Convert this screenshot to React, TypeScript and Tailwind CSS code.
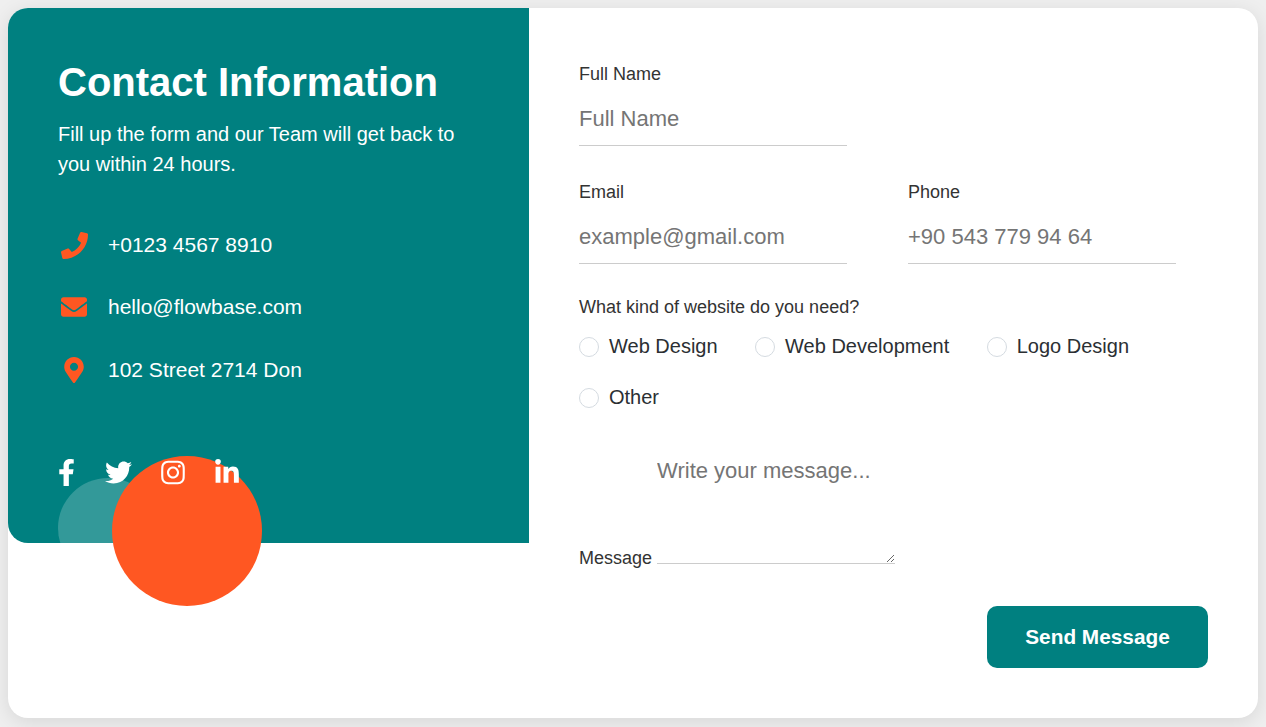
import { FaPhone, FaEnvelope, FaMapMarkerAlt, FaFacebookF, FaTwitter, FaInstagram, FaLinkedinIn } from "react-icons/fa";

const Field = ({ label, placeholder }: { label: string; placeholder: string }) => (
  <label className="block w-[268px]">
    <span className="block h-[20px] text-[18px] leading-[20px] text-[#333]">{label}</span>
    <input
      placeholder={placeholder}
      className="block mt-[9px] h-[53px] w-full border-b border-[#ccc] text-[22px] text-[#333] outline-none placeholder:text-[#757575]"
    />
  </label>
);

const Radio = ({ label }: { label: string }) => (
  <label className="flex items-center gap-[10px] text-[20px] leading-[23px] text-[#2b2f33]">
    <input type="radio" name="kind" className="appearance-none size-[20px] rounded-full border border-[#d5dbe1] bg-white" />
    {label}
  </label>
);

const contacts = [
  { icon: <FaPhone className="size-[27px]" />, text: "+0123 4567 8910" },
  { icon: <FaEnvelope className="size-[26px]" />, text: "hello@flowbase.com" },
  { icon: <FaMapMarkerAlt className="size-[26px]" />, text: "102 Street 2714 Don" },
];

export default function App() {
  return (
    <div className="h-[727px] overflow-hidden bg-[#efefef] p-[8px] font-['Liberation_Sans',Arial,sans-serif]">
      <div className="relative flex h-[710px] w-[1250px] items-start overflow-hidden rounded-[20px] bg-white shadow-[0_4px_20px_rgba(0,0,0,0.1)]">
        {/* left panel */}
        <div className="h-[535px] w-[521px] shrink-0 rounded-bl-[20px] bg-[#008080] pl-[50px] pt-[50px] text-white">
          <h1 className="text-[40px] font-bold leading-[48px]">Contact Information</h1>
          <p className="mt-[13px] w-[410px] text-[20px] leading-[30px]">
            Fill up the form and our Team will get back to you within 24 hours.
          </p>
          <ul className="mt-[54px] flex flex-col gap-[38px]">
            {contacts.map((c) => (
              <li key={c.text} className="flex h-[24px] items-center gap-[18px] text-[21px] last:mt-[1px]">
                <span className="flex w-[32px] justify-center text-[#ff5722]">{c.icon}</span>
                {c.text}
              </li>
            ))}
          </ul>
          <div className="relative z-10 mt-[77px] flex items-center gap-[29.5px]">
            <FaFacebookF className="h-[27px] w-[17px]" />
            <FaTwitter className="h-[27px] w-[27px]" />
            <FaInstagram className="h-[27px] w-[24px]" />
            <FaLinkedinIn className="h-[27px] w-[24px]" />
          </div>
        </div>

        {/* decorative circles */}
        <div className="absolute left-[50px] top-[470px] size-[100px] rounded-full bg-white/20 [clip-path:inset(0_0_35px_0)]" />
        <div className="absolute left-[104px] top-[448px] size-[150px] rounded-full bg-[#ff5722]" />

        {/* form */}
        <form className="flex-1 pl-[50px] pr-[50px] pt-[56px]">
          <Field label="Full Name" placeholder="Full Name" />
          <div className="mt-[36px] flex gap-[61px]">
            <Field label="Email" placeholder="example@gmail.com" />
            <Field label="Phone" placeholder="+90 543 779 94 64" />
          </div>
          <p className="mt-[33px] text-[18px] leading-[20px] text-[#333]">What kind of website do you need?</p>
          <div className="mt-[18px] flex flex-wrap gap-x-[37.5px] gap-y-[28px]">
            <Radio label="Web Design" />
            <Radio label="Web Development" />
            <Radio label="Logo Design" />
            <Radio label="Other" />
          </div>
          <label className="mt-[42px] block text-[18px] text-[#333]">
            Message{" "}
            <textarea
              placeholder="Write your message..."
              className="inline-block h-[113px] w-[238px] border-b border-[#ccc] pt-[3px] align-baseline text-[22px] outline-none placeholder:text-[#757575]"
            />
          </label>
          <div className="mt-[34px] flex justify-end">
            <button type="button" className="h-[62px] w-[221px] rounded-[10px] bg-[#008080] text-[20.8px] font-bold text-white">
              Send Message
            </button>
          </div>
        </form>
      </div>
    </div>
  );
}
